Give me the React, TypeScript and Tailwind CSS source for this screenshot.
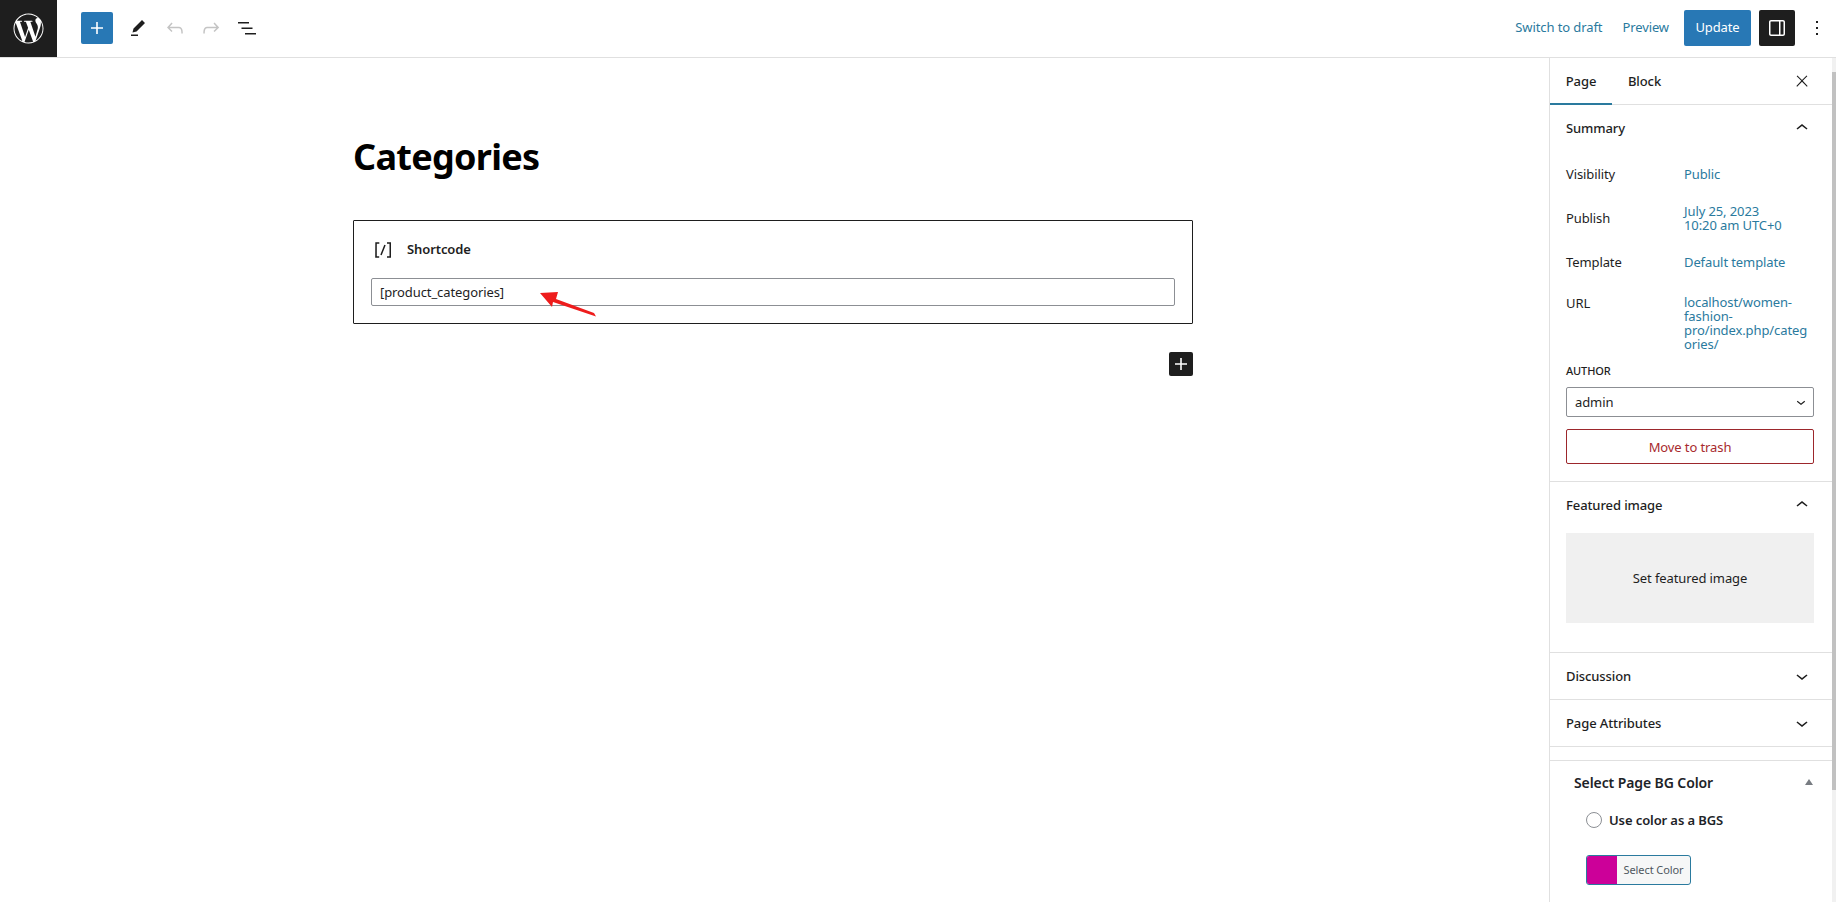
import React from "react";

const I = ({ d, className = "", size = 24 }: { d: string; className?: string; size?: number }) => (
  <svg width={size} height={size} viewBox="0 0 24 24" className={className} fill="currentColor" aria-hidden="true">
    <path d={d} />
  </svg>
);

const P = {
  plus: "M18 11.2h-5.2V6h-1.6v5.2H6v1.6h5.2V18h1.6v-5.2H18z",
  edit: "m19 7-3-3-8.5 8.5-1 4 4-1L19 7Zm-7 11.5H5V20h7v-1.5Z",
  undo: "M18.3 11.7c-.6-.6-1.4-.9-2.3-.9H6.7l2.9-3.3-1.1-1-4.5 5L8.5 16l1-1-2.7-2.7H16c.5 0 .9.2 1.3.5 1 1 1 3.4 1 4.5v.3h1.5v-.2c0-1.5 0-4.3-1.5-5.7z",
  redo: "M15.6 6.5l-1.1 1 2.9 3.3H8c-.9 0-1.7.3-2.3.9-1.4 1.5-1.4 4.2-1.4 5.6v.2h1.5v-.3c0-1.1 0-3.5 1-4.5.3-.3.7-.5 1.3-.5h9.2L14.5 15l1.1 1.1 4.6-4.6-4.6-5z",
  list: "M3 6h11v1.5H3V6Zm3.5 5.5h11V13h-11v-1.5ZM21 17H10v1.5h11V17Z",
  drawer: "M18 4H6c-1.1 0-2 .9-2 2v12c0 1.1.9 2 2 2h12c1.1 0 2-.9 2-2V6c0-1.1-.9-2-2-2zm-4 14.5H6c-.3 0-.5-.2-.5-.5V6c0-.3.2-.5.5-.5h8v13zm4.5-.5c0 .3-.2.5-.5.5h-2.5v-13H18c.3 0 .5.2.5.5v12z",
  more: "M13 19h-2v-2h2v2zm0-6h-2v-2h2v2zm0-6h-2V5h2v2z",
  close: "M13 11.8l6.1-6.3-1-1-6.1 6.2-6.1-6.2-1 1 6.1 6.3-6.5 6.7 1 1 6.5-6.6 6.5 6.6 1-1z",
  up: "M6.5 12.4L12 8l5.5 4.4-.9 1.2L12 10l-4.5 3.6-1-1.2z",
  down: "M17.5 11.6L12 16l-5.5-4.4.9-1.2L12 14l4.5-3.6 1 1.2z",
  shortcode: "M16 4.2v1.5h2.5v12.5H16v1.5h4V4.2h-4zM4.2 19.8h4v-1.5H5.8V5.8h2.5V4.2h-4l-.1 15.6zm5.1-3.1l1.4.6 4-10-1.4-.6-4 10z",
};

const WpLogo = () => (
  <svg width="33" height="33" viewBox="0 0 80 80" fill="#fff" aria-hidden="true">
    <path d="M40 3.6C19.9 3.6 3.6 19.9 3.6 40S19.9 76.4 40 76.4 76.4 60.1 76.4 40 60.1 3.6 40 3.6zM6 40c0-4.9 1.1-9.6 2.9-13.8l16.2 44.4C13.8 65 6 53.4 6 40zm34 34c-3.3 0-6.5-.5-9.6-1.4l10.2-29.6 10.4 28.6c.1.2.2.3.2.5-3.4 1.2-7.2 1.9-11.2 1.9zm4.7-49.9c2-.1 3.9-.3 3.9-.3 1.8-.2 1.6-2.9-.2-2.8 0 0-5.5.4-9 .4-3.3 0-8.9-.4-8.9-.4-1.8-.1-2 2.7-.2 2.8 0 0 1.7.2 3.5.3l5.2 14.3-7.3 22-12.2-36.3c2-.1 3.8-.3 3.8-.3 1.8-.2 1.6-2.9-.2-2.8 0 0-5.5.4-9 .4-.6 0-1.4 0-2.2-.1C18.1 12.1 28.4 6 40 6c8.7 0 16.6 3.3 22.6 8.7-.1 0-.3 0-.4 0-3.3 0-5.6 2.9-5.6 5.9 0 2.8 1.6 5.1 3.3 7.9 1.3 2.2 2.8 5.1 2.8 9.2 0 2.9-1.1 6.2-2.6 10.8l-3.3 11.2-12.1-35.6zm12.4 45.4 10.4-30c1.9-4.9 2.6-8.7 2.6-12.2 0-1.3-.1-2.4-.2-3.5C72.6 28.6 74 34.1 74 40c0 12.5-6.8 23.4-16.9 29.5z" />
  </svg>
);

const Row = ({ label, children, mt = "mt-2" }: { label: string; children: React.ReactNode; mt?: string }) => (
  <div className={`flex h-9 items-center ${mt}`}>
    <div className="w-[118px] shrink-0 pt-[2px] text-[#1e1e1e]">{label}</div>
    <div className="leading-[14px] text-[#2a7a9e]">{children}</div>
  </div>
);

const Collapsed = ({ label }: { label: string }) => (
  <div className="flex h-[47px] items-center justify-between border-b border-[#e0e0e0] pl-4 pr-[18px]">
    <span className="pt-[2px] font-medium text-[#1e1e1e]">{label}</span>
    <I d={P.down} className="text-[#1e1e1e]" />
  </div>
);

export default function App() {
  return (
    <div className="flex h-[902px] w-[1836px] flex-col overflow-hidden bg-white font-['Noto_Sans','Open_Sans',sans-serif] text-[13px] tracking-[-0.1px]">
      <header className="flex h-[58px] shrink-0 items-center border-b border-[#e0e0e0] pb-[2px]">
        <div className="flex h-[57px] w-[57px] items-center justify-center self-start bg-[#1e1e1e]">
          <WpLogo />
        </div>
        <div className="ml-6 flex h-8 w-8 items-center justify-center rounded-[2px] bg-[#2878b5] text-white">
          <I d={P.plus} />
        </div>
        <div className="ml-[6px] flex w-[38px] justify-center text-[#1e1e1e]"><I d={P.edit} /></div>
        <div className="flex w-9 justify-center text-[#c4c4c4]"><I d={P.undo} /></div>
        <div className="flex w-[36px] justify-center text-[#c4c4c4]"><I d={P.redo} /></div>
        <div className="flex w-[36px] justify-center text-[#1e1e1e]"><I d={P.list} /></div>
        <div className="ml-auto pt-[1px] text-[#2a7a9e]">Switch to draft</div>
        <div className="ml-5 pt-[1px] text-[#2a7a9e]">Preview</div>
        <div className="ml-[15px] flex h-9 w-[67px] items-center justify-center rounded-[2px] bg-[#2878b5] pt-[1px] text-white">Update</div>
        <div className="ml-2 flex h-9 w-9 items-center justify-center rounded-[2px] bg-[#1e1e1e] text-white"><I d={P.drawer} /></div>
        <div className="ml-[6px] mr-[3px] flex w-[32px] justify-center text-[#1e1e1e]"><I d={P.more} /></div>
      </header>

      <div className="flex min-h-0 flex-1">
        <main className="flex-1 pl-[353px]">
          <div className="w-[840px]">
            <h1 className="mt-[73px] h-[52px] text-[36px] font-bold leading-[52px] tracking-[-0.7px] text-black">Categories</h1>
            <div className="relative mt-[37px] h-[104px] rounded-[1px] border border-[#1e1e1e] px-[17px]">
              <div className="mt-[17px] flex h-6 items-center text-[13px] font-semibold text-[#1e1e1e]">
                <I d={P.shortcode} />
                <span className="ml-[12px]">Shortcode</span>
              </div>
              <div className="mt-[16px] flex h-[28px] items-center rounded-[2px] border border-[#8c8f94] px-2 pt-[2px] text-[#1e1e1e]">[product_categories]</div>
              <svg className="absolute left-[186px] top-[70px]" width="60" height="28" viewBox="0 0 60 28" aria-hidden="true">
                <path d="M0 2 18 1 16 8 54 22 56 25.5 13 11 12 16Z" fill="#ee1c1c" />
              </svg>
            </div>
            <div className="mt-[28px] flex justify-end">
              <div className="flex h-6 w-6 items-center justify-center rounded-[2px] bg-[#1e1e1e] text-white"><I d={P.plus} /></div>
            </div>
          </div>
        </main>

        <aside className="flex w-[287px] shrink-0 border-l border-[#e0e0e0]">
          <div className="min-w-0 flex-1">
            <div className="flex h-[47px] items-center justify-between border-b border-[#e0e0e0] pr-[21px]">
              <div className="flex h-full">
                <div className="flex h-[47px] w-[62px] items-center justify-center border-b-2 border-[#2a7a9e] pt-[2px] font-medium text-[#1e1e1e]">Page</div>
                <div className="flex h-[46px] w-[65px] items-center justify-center pt-[2px] font-medium text-[#1e1e1e]">Block</div>
              </div>
              <I d={P.close} className="text-[#1e1e1e]" size={18} />
            </div>

            <section className="h-[377px] border-b border-[#e0e0e0] pl-4 pr-[18px]">
              <div className="flex h-[46px] items-center justify-between">
                <span className="pt-[2px] font-medium text-[#1e1e1e]">Summary</span>
                <I d={P.up} className="text-[#1e1e1e]" />
              </div>
              <Row label="Visibility" mt="mt-[5px]">Public</Row>
              <Row label="Publish">
                <div>July 25, 2023</div>
                <div>10:20 am UTC+0</div>
              </Row>
              <Row label="Template">Default template</Row>
              <div className="mt-[15px] flex">
                <div className="w-[118px] shrink-0 pt-[1px] leading-[14px] text-[#1e1e1e]">URL</div>
                <div className="whitespace-nowrap leading-[14px] text-[#2a7a9e]">
                  <div>localhost/women-</div>
                  <div>fashion-</div>
                  <div>pro/index.php/categ</div>
                  <div>ories/</div>
                </div>
              </div>
              <div className="mt-[13px] text-[11px] font-medium uppercase leading-[14px] text-[#1e1e1e]">Author</div>
              <div className="mt-[9px] flex h-[30px] items-center justify-between rounded-[2px] border border-[#8c8f94] pl-2 pr-[3px] text-[#1e1e1e]">
                <span className="pt-[2px]">admin</span>
                <I d={P.down} size={18} />
              </div>
              <div className="mt-3 flex h-[35px] items-center justify-center rounded-[2px] border border-[#9c272c] pt-[2px] text-[#a82a2e]">Move to trash</div>
            </section>

            <section className="h-[171px] border-b border-[#e0e0e0] pl-4 pr-[18px]">
              <div className="flex h-[46px] items-center justify-between">
                <span className="pt-[2px] font-medium text-[#1e1e1e]">Featured image</span>
                <I d={P.up} className="text-[#1e1e1e]" />
              </div>
              <div className="mt-[5px] flex h-[90px] items-center justify-center bg-[#f0f0f0] pt-[2px] text-[#1e1e1e]">Set featured image</div>
            </section>

            <Collapsed label="Discussion" />
            <Collapsed label="Page Attributes" />
            <div className="h-[14px] border-b border-[#e0e0e0]" />

            <section className="pl-6 pr-[19px]">
              <div className="flex h-[44px] items-center justify-between pb-[2px]">
                <span className="text-[14px] font-semibold text-[#1d2327]">Select Page BG Color</span>
                <span className="h-0 w-0 border-x-[4px] border-b-[6px] border-x-transparent border-b-[#787c82]" />
              </div>
              <div className="ml-3 mt-[7px] flex h-4 items-center">
                <span className="h-4 w-4 rounded-full border border-[#8c8f94]" />
                <span className="ml-[7px] pt-[2px] font-semibold text-[#1d2327]">Use color as a BGS</span>
              </div>
              <div className="ml-3 mt-[27px] flex h-[30px] w-[105px] overflow-hidden rounded-[3px] border border-[#2a7a9e] bg-[#f6f7f7]">
                <span className="w-[30px] bg-[#cc0099]" />
                <span className="flex flex-1 items-center justify-center text-[11px] text-[#50575e]">Select Color</span>
              </div>
            </section>
          </div>
          <div className="flex w-[4px] shrink-0 flex-col bg-[#f1f1f1]">
            <div className="h-[14px]" />
            <div className="h-[718px] bg-[#c1c1c1]" />
          </div>
        </aside>
      </div>
    </div>
  );
}
